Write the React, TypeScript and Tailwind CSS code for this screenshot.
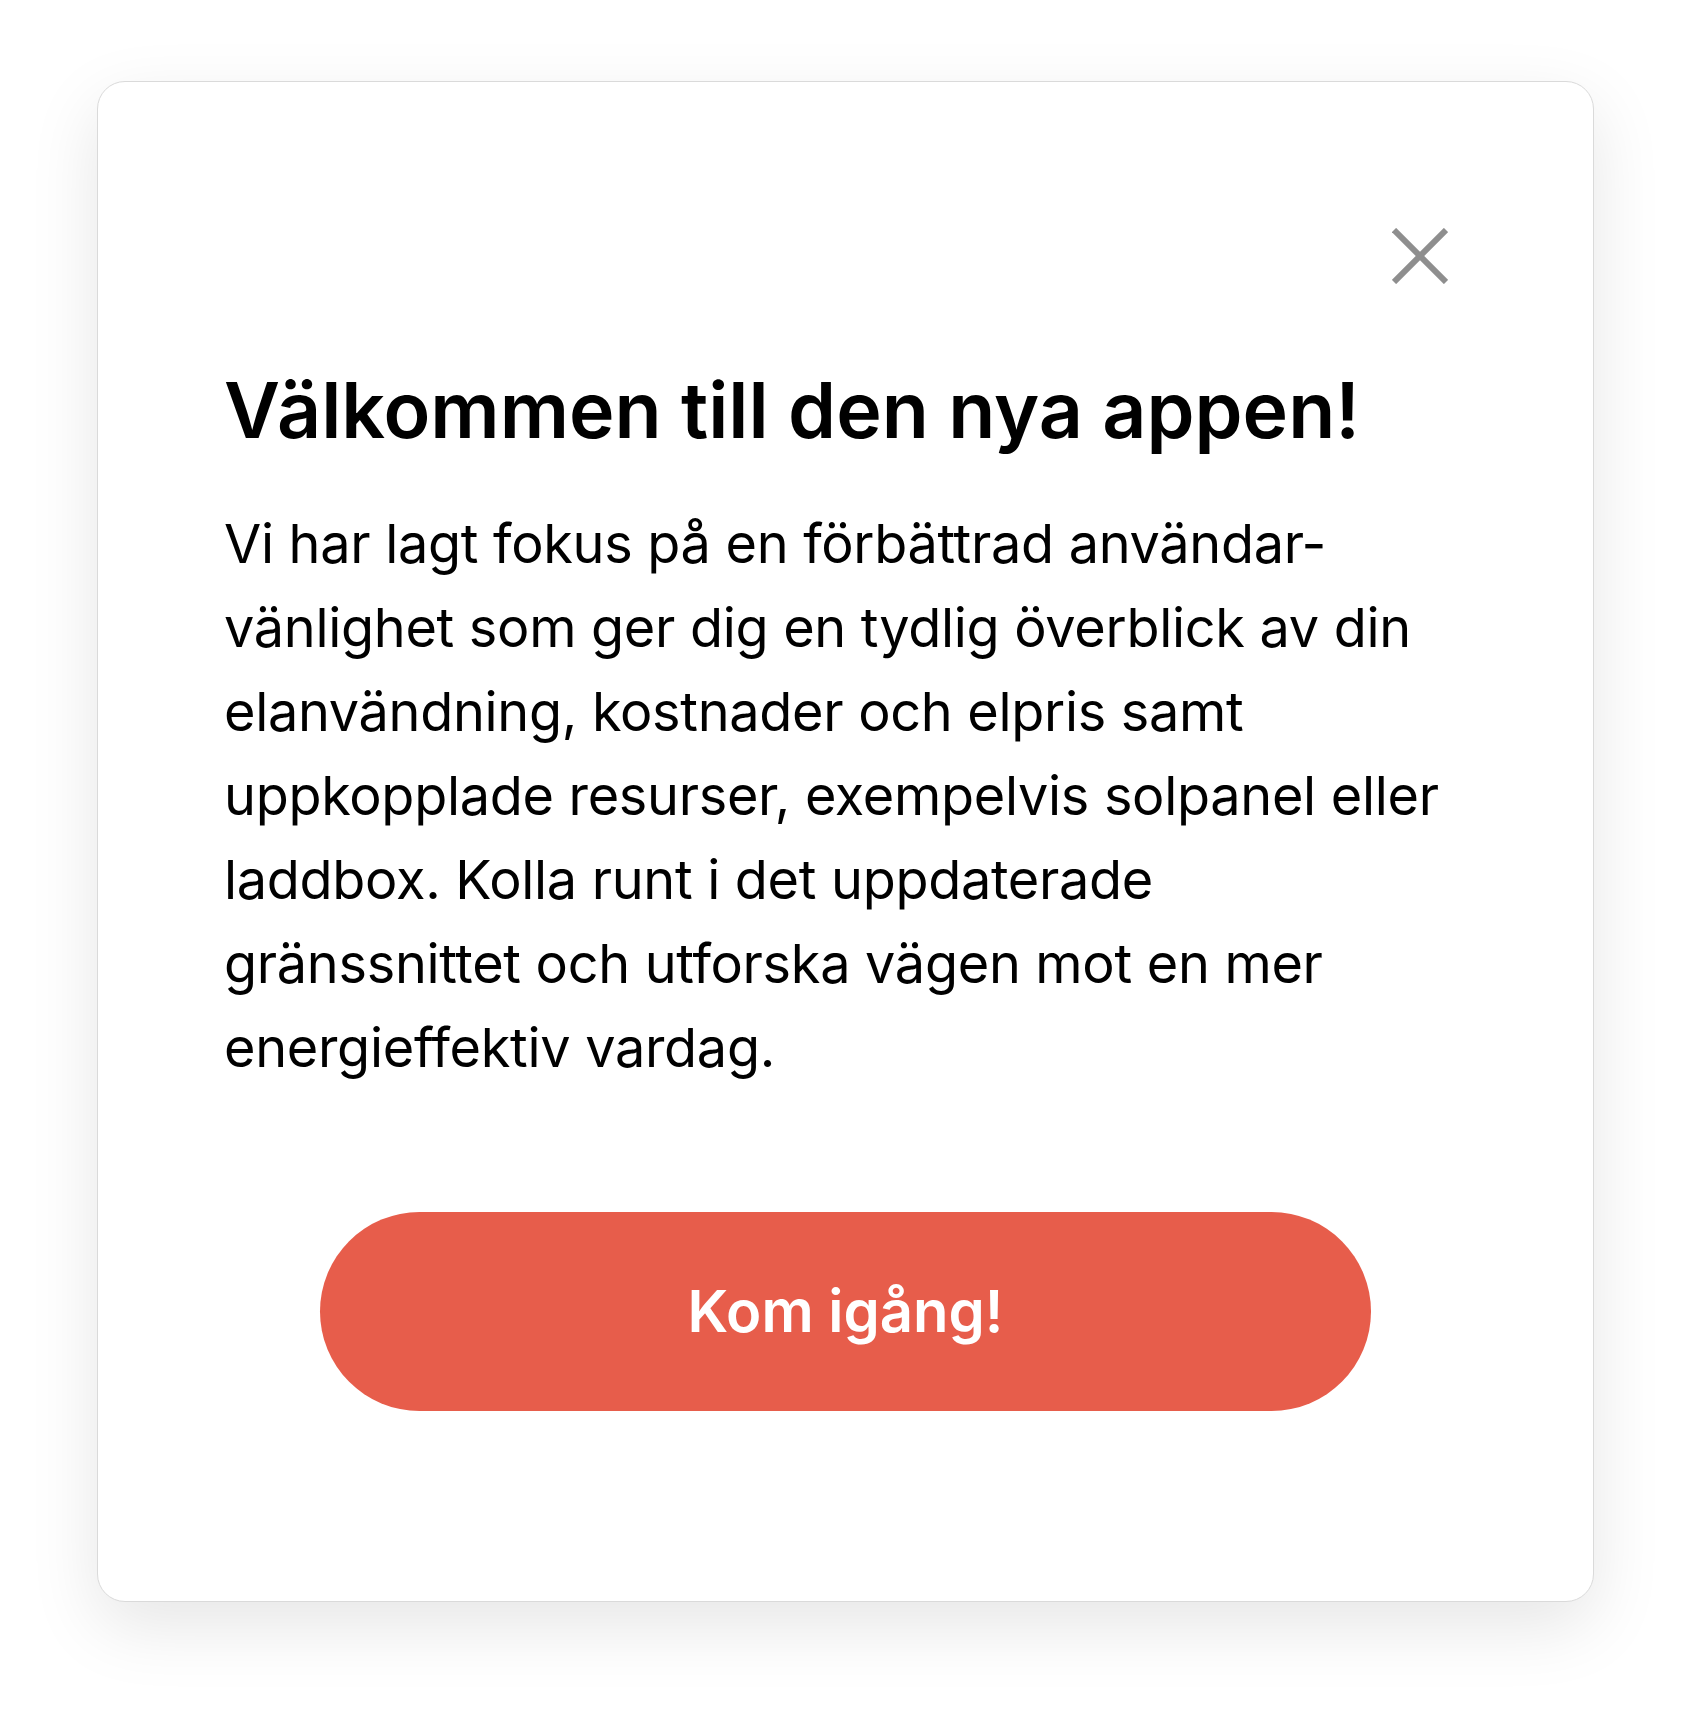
import React from 'react';

const lines = [
  'Vi har lagt fokus på en förbättrad användar-',
  'vänlighet som ger dig en tydlig överblick av din',
  'elanvändning, kostnader och elpris samt',
  'uppkopplade resurser, exempelvis solpanel eller',
  'laddbox. Kolla runt i det uppdaterade',
  'gränssnittet och utforska vägen mot en mer',
  'energieffektiv vardag.',
];

// Close icon, a plain gray cross
const CloseIcon: React.FC = () => (
  <svg width="56" height="56" viewBox="0 0 56 56" fill="none">
    <line x1="2" y1="2" x2="54" y2="54" stroke="#8e8e8e" strokeWidth="6" />
    <line x1="54" y1="2" x2="2" y2="54" stroke="#8e8e8e" strokeWidth="6" />
  </svg>
);

const App: React.FC = () => {
  return (
    <div
      className="w-[1692px] h-[1716px] bg-white pt-[81px] pl-[97px]"
      style={{ fontFamily: 'Inter, "Noto Sans", sans-serif' }}
    >
      <div className="w-[1497px] h-[1521px] bg-white rounded-[28px] border border-[#dadada] shadow-[0_24px_70px_rgba(0,0,0,0.10)] flex flex-col pt-[146px] pl-[126px] pr-[145px]">
        {/* Close button */}
        <div className="flex justify-end h-[56px]">
          <button className="w-[56px] h-[56px]" aria-label="Stäng">
            <CloseIcon />
          </button>
        </div>

        <h1 className="mt-[88px] text-[77px] leading-none font-semibold text-black">
          Välkommen till den nya appen!
        </h1>

        <p className="mt-[53px] text-[54px] leading-[84px] text-black tracking-[-0.3px]">
          {lines.map((line, i) => (
            <span key={i} className="block whitespace-nowrap">
              {line}
            </span>
          ))}
        </p>

        <div className="mt-[122px] flex justify-center">
          <button className="w-[1051px] h-[199px] rounded-full bg-[#e75d4b] text-white text-[58px] font-semibold ml-[19px]">
            Kom igång!
          </button>
        </div>
      </div>
    </div>
  );
};

export default App;
